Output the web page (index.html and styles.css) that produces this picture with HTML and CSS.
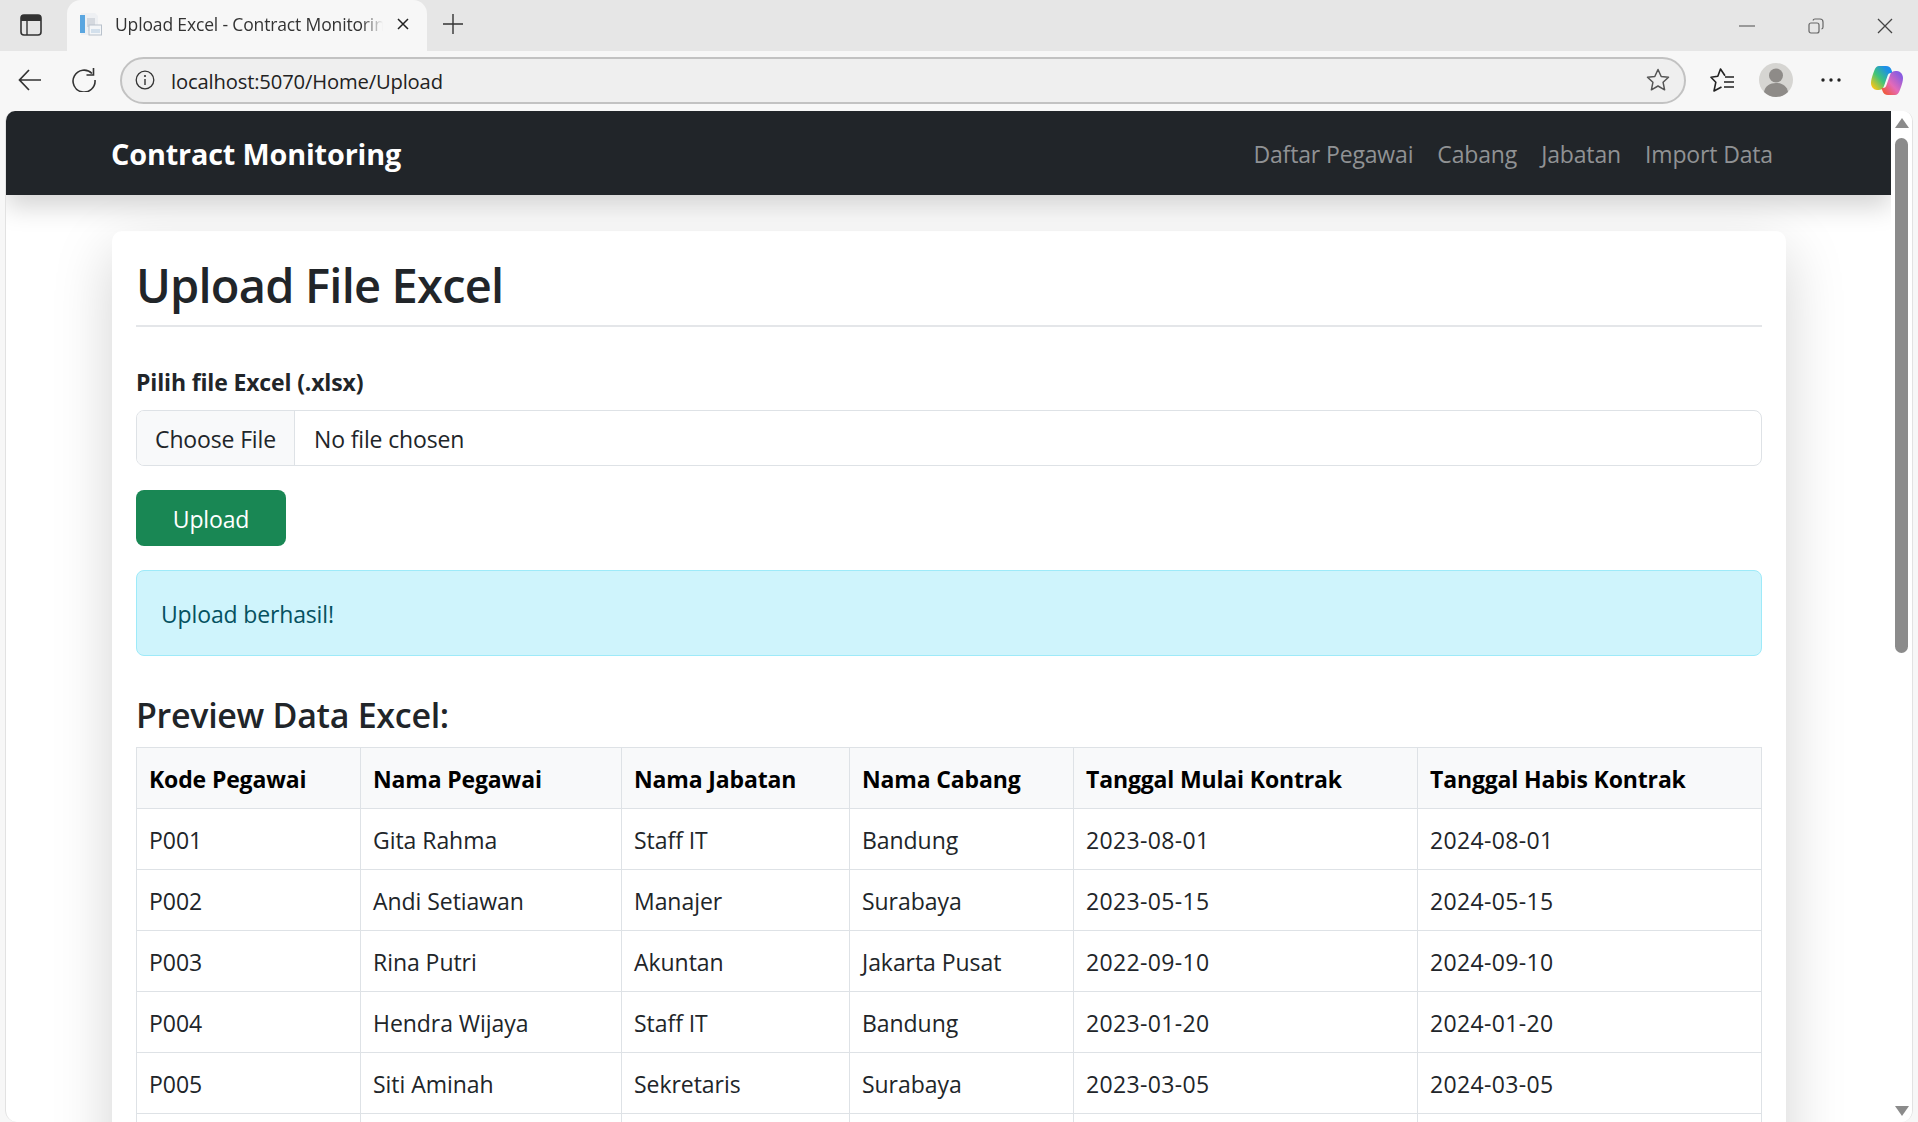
FILE: index.html
```html
<!DOCTYPE html>
<html lang="en">
<head>
  <meta charset="UTF-8" />
  <title>Upload Excel - Contract Monitoring</title>
  <link rel="stylesheet" href="styles.css">
</head>
<body>
  <!-- browser chrome -->
  <div class="tabstrip">
    <svg class="sidebar-icon" width="22" height="22" viewBox="0 0 22 22"><rect x="1" y="1" width="20" height="20" rx="3" fill="none" stroke="#333" stroke-width="1.6"/><path d="M1 4a3 3 0 0 1 3-3h14a3 3 0 0 1 3 3v3H1z" fill="#333"/><path d="M7 7v14" stroke="#333" stroke-width="1.4"/></svg>
    <div class="tab">
      <svg class="favicon" width="24" height="24" viewBox="0 0 24 24"><path d="M3 1h14l3 3v19H3z" fill="#eef0f3"/><rect x="2" y="3" width="5" height="18" fill="#5aa6e0"/><rect x="9" y="6" width="8" height="9" fill="#d5d9df"/><rect x="11" y="13" width="12.500" height="10" fill="#f4f6f8" stroke="#b9c2cc"/><rect x="13" y="17" width="9" height="4" fill="#d3e0ec"/></svg>
      <span class="tab-title">Upload Excel - Contract Monitoring</span>
      <svg class="tab-close" width="14" height="14" viewBox="0 0 14 14"><path d="M2 2l10 10M12 2L2 12" stroke="#222" stroke-width="1.5"/></svg>
    </div>
    <svg class="new-tab" width="20" height="20" viewBox="0 0 20 20"><path d="M10 0v20M0 10h20" stroke="#333" stroke-width="1.4"/></svg>
    <div class="window-controls">
      <svg width="16" height="16" viewBox="0 0 16 16"><path d="M0 8h16" stroke="#777" stroke-width="1.4"/></svg>
      <svg width="16" height="16" viewBox="0 0 16 16"><rect x="1" y="5" width="10" height="10" rx="2" fill="none" stroke="#666" stroke-width="1.2"/><path d="M5 2.500A2 2 0 0 1 7 1h5a3 3 0 0 1 3 3v5a2 2 0 0 1-1.500 2" fill="none" stroke="#666" stroke-width="1.2"/></svg>
      <svg width="16" height="16" viewBox="0 0 16 16"><path d="M1 1l14 14M15 1L1 15" stroke="#444" stroke-width="1.3"/></svg>
    </div>
  </div>

  <div class="toolbar">
    <svg class="back" width="24" height="24" viewBox="0 0 24 24"><path d="M23 12H2M11 2L1.500 12 11 22" fill="none" stroke="#333" stroke-width="1.7"/></svg>
    <svg class="reload" width="24" height="24" viewBox="0 0 24 24"><path d="M20 5.500A11 11 0 1 0 23 12" fill="none" stroke="#333" stroke-width="1.6"/><path d="M21.500 0v7h-7" fill="none" stroke="#333" stroke-width="1.6"/></svg>
    <div class="address">
      <svg width="20" height="20" viewBox="0 0 20 20"><circle cx="10" cy="10" r="8.800" fill="none" stroke="#333" stroke-width="1.3"/><circle cx="10" cy="6" r="1.100" fill="#333"/><path d="M10 9v6" stroke="#333" stroke-width="1.4"/></svg>
      <span class="url">localhost:5070/Home/Upload</span>
      <svg class="fav-star" width="24" height="24" viewBox="0 0 24 24"><path d="M12 1.500l3.200 7 7.300.8-5.400 5 1.500 7.500L12 18l-6.600 3.800 1.500-7.500-5.400-5 7.300-.8z" fill="none" stroke="#555" stroke-width="1.500" stroke-linejoin="round"/></svg>
    </div>
    <svg class="favorites" width="24" height="24" viewBox="0 0 24 24"><path d="M15 7.800L10.500 1 7.800 8.300 1 9.300l4.800 5L4 23l7.500-4" fill="none" stroke="#222" stroke-width="1.600" stroke-linejoin="round"/><path d="M15 9h9M14 14h10M14 19h10" stroke="#222" stroke-width="1.600"/></svg>
    <svg class="avatar" width="34" height="34" viewBox="0 0 34 34"><circle cx="17" cy="17" r="17" fill="#d6d5d2"/><circle cx="17" cy="12.500" r="7" fill="#8e8b88"/><path d="M5 29c1-6 6-9 12-9s11 3 12 9a17 17 0 0 1-24 0z" fill="#8e8b88"/></svg>
    <svg class="more" width="20" height="4" viewBox="0 0 20 4"><circle cx="2" cy="2" r="1.700" fill="#222"/><circle cx="10" cy="2" r="1.700" fill="#222"/><circle cx="18" cy="2" r="1.700" fill="#222"/></svg>
    <svg class="copilot" width="32" height="31" viewBox="0 0 32 31">
      <defs>
        <linearGradient id="copilotLeft" x1="0" y1="1" x2="1" y2="0"><stop offset=".1" stop-color="#f5c518"/><stop offset=".45" stop-color="#3fc47a"/><stop offset=".8" stop-color="#1d8fe8"/></linearGradient>
        <linearGradient id="copilotRight" x1="0" y1="1" x2="1" y2="0"><stop offset=".15" stop-color="#8a5ce0"/><stop offset=".55" stop-color="#e46ab8"/><stop offset=".95" stop-color="#f2562a"/></linearGradient>
      </defs>
      <path d="M8 1H15C18 1 19.500 2.500 20.500 5L21.500 8H20C18 8 17 9 16.500 11L13 21C12 24 10 25 7.500 25H6C3 25 0 22 0 18C0 15 1 12 2 9L3.500 5C4.500 2.500 6 1 8 1Z" fill="url(#copilotLeft)"/>
      <path d="M8 1H15C18 1 19.500 2.500 20.500 5L21.500 8H20C18 8 17 9 16.500 11L13 21C12 24 10 25 7.500 25H6C3 25 0 22 0 18C0 15 1 12 2 9L3.500 5C4.500 2.500 6 1 8 1Z" fill="url(#copilotRight)" transform="rotate(180 16 15.500)"/>
    </svg>
  </div>

  <div class="window">
    <div class="page">
      <nav class="navbar">
        <a class="brand" href="#">Contract Monitoring</a>
        <ul class="nav-links">
          <li><a href="#">Daftar Pegawai</a></li>
          <li><a href="#">Cabang</a></li>
          <li><a href="#">Jabatan</a></li>
          <li><a href="#">Import Data</a></li>
        </ul>
      </nav>

      <main class="card">
        <h1>Upload File Excel</h1>
        <form class="upload-form">
          <label class="form-label">Pilih file Excel (.xlsx)</label>
          <div class="file-input">
            <span class="file-button">Choose File</span>
            <span class="file-name">No file chosen</span>
          </div>
          <button class="btn-upload" type="button">Upload</button>
        </form>
        <div class="alert">Upload berhasil!</div>
        <h3>Preview Data Excel:</h3>
        <table class="data-table">
          <colgroup>
            <col class="col-kode"><col class="col-nama"><col class="col-jabatan"><col class="col-cabang"><col class="col-mulai"><col class="col-habis">
          </colgroup>
          <thead>
            <tr><th>Kode Pegawai</th><th>Nama Pegawai</th><th>Nama Jabatan</th><th>Nama Cabang</th><th>Tanggal Mulai Kontrak</th><th>Tanggal Habis Kontrak</th></tr>
          </thead>
          <tbody>
            <tr><td>P001</td><td>Gita Rahma</td><td>Staff IT</td><td>Bandung</td><td>2023-08-01</td><td>2024-08-01</td></tr>
            <tr><td>P002</td><td>Andi Setiawan</td><td>Manajer</td><td>Surabaya</td><td>2023-05-15</td><td>2024-05-15</td></tr>
            <tr><td>P003</td><td>Rina Putri</td><td>Akuntan</td><td>Jakarta Pusat</td><td>2022-09-10</td><td>2024-09-10</td></tr>
            <tr><td>P004</td><td>Hendra Wijaya</td><td>Staff IT</td><td>Bandung</td><td>2023-01-20</td><td>2024-01-20</td></tr>
            <tr><td>P005</td><td>Siti Aminah</td><td>Sekretaris</td><td>Surabaya</td><td>2023-03-05</td><td>2024-03-05</td></tr>
            <tr><td>&nbsp;</td><td>&nbsp;</td><td>&nbsp;</td><td>&nbsp;</td><td>&nbsp;</td><td>&nbsp;</td></tr>
          </tbody>
        </table>
      </main>
    </div>

    <div class="scrollbar">
      <span class="arrow-up"></span>
      <span class="thumb"></span>
      <span class="track"></span>
      <span class="arrow-down"></span>
    </div>
  </div>
</body>
</html>
```

FILE: styles.css
```css
/* Reset */
* {
  box-sizing: border-box;
}

html, body {
  height: 100%;
  margin: 0;
  overflow: hidden;
}

body {
  display: flex;
  flex-direction: column;
  background: #f7f7f7;
  color: #212529;
  font-family: "Open Sans", "Noto Sans", Arial, sans-serif;
  font-size: 23px;
  letter-spacing: -0.15px;
}

/* Tab strip */
.tabstrip {
  height: 51px;
  flex: none;
  display: flex;
  align-items: center;
  background: #e6e6e6;
}

.sidebar-icon {
  margin: 0 25px 2px 20px;
}

.tab {
  width: 360px;
  height: 51px;
  display: flex;
  align-items: center;
  padding: 0 16px 4px 11px;
  background: #f7f7f7;
  border-radius: 14px 14px 0 0;
}

.tab-title {
  width: 268px;
  margin-left: 13px;
  font-size: 17.5px;
  color: #333;
  white-space: nowrap;
  overflow: hidden;
  -webkit-mask-image: linear-gradient(to right, #000 92%, transparent);
  mask-image: linear-gradient(to right, #000 92%, transparent);
}

.tab-close {
  margin-left: 13px;
}

.new-tab {
  margin: 0 0 4px 16px;
}

.window-controls {
  margin-left: auto;
  display: flex;
  align-items: center;
  gap: 53px;
  padding-right: 25px;
}

/* Toolbar */
.toolbar {
  height: 60px;
  flex: none;
  display: flex;
  align-items: center;
  padding-bottom: 2px;
}

.back {
  margin-left: 18px;
}

.reload {
  margin-left: 30px;
}

.address {
  width: 1566px;
  height: 47px;
  margin-left: 24px;
  padding: 0 14px 0 13px;
  display: flex;
  align-items: center;
  background: #efefef;
  border: 2px solid #c2c2c2;
  border-radius: 24px;
}

.url {
  margin-left: 16px;
  padding-top: 2px;
  font-size: 20.2px;
  color: #222;
}

.fav-star {
  margin-left: auto;
}

.favorites {
  margin-left: 24px;
}

.avatar {
  margin-left: 25px;
}

.more {
  margin-left: 28px;
}

.copilot {
  margin-left: 30px;
}

/* Page viewport */
.window {
  flex: 1;
  min-height: 0;
  display: flex;
  margin: 0 5px;
  background: #fff;
  border-left: 1px solid #e2e2e2;
  border-right: 1px solid #e2e2e2;
  border-radius: 10px 10px 12px 12px;
  overflow: hidden;
}

.page {
  width: 1885px;
  flex: none;
  overflow: hidden;
}

.navbar {
  height: 84px;
  position: relative;
  display: flex;
  align-items: center;
  justify-content: space-between;
  padding: 2px 118px 0 105px;
  background: #212529;
  box-shadow: 0 12px 24px rgba(0,0,0,.17);
}

.brand {
  margin-bottom: 2px;
  color: #fff;
  font-size: 28.8px;
  font-weight: 700;
  text-decoration: none;
}

.nav-links {
  display: flex;
  gap: 24px;
  margin: 0;
  padding: 0;
  list-style: none;
}

.nav-links a {
  color: #909294;
  text-decoration: none;
}

/* Card */
.card {
  width: 1674px;
  margin: 36px 0 0 106px;
  padding: 24px 24px 40px;
  background: #fff;
  border-radius: 10px;
  box-shadow: 0 20px 60px rgba(0,0,0,.175);
}

h1 {
  margin: 0 0 37px;
  padding-bottom: 9px;
  font-size: 47px;
  font-weight: 600;
  letter-spacing: -0.8px;
  line-height: 61px;
  border-bottom: 2px solid #e4e6e9;
}

.form-label {
  display: block;
  margin-bottom: 10px;
  font-weight: 700;
  line-height: 36px;
}

.file-input {
  height: 56px;
  display: flex;
  align-items: center;
  border: 1px solid #dee2e6;
  border-radius: 8px;
  overflow: hidden;
}

.file-button {
  width: 158px;
  height: 100%;
  padding-top: 2px;
  display: flex;
  align-items: center;
  justify-content: center;
  background: #f8f9fa;
  border-right: 1px solid #dee2e6;
}

.file-name {
  margin-left: 19px;
  padding-top: 2px;
}

.btn-upload {
  display: block;
  width: 150px;
  height: 56px;
  margin-top: 24px;
  padding: 2px 0 0;
  background: #198754;
  border: none;
  border-radius: 8px;
  color: #fff;
  font: inherit;
  letter-spacing: inherit;
}

.alert {
  height: 86px;
  margin-top: 24px;
  padding: 2px 24px 0;
  display: flex;
  align-items: center;
  background: #cff4fc;
  border: 1px solid #9eeaf9;
  border-radius: 8px;
  color: #055160;
}

h3 {
  margin: 37px 0 10px;
  font-size: 34px;
  font-weight: 600;
  letter-spacing: -0.3px;
  line-height: 44px;
}

/* Table */
.data-table {
  width: 1625px;
  table-layout: fixed;
  border-collapse: collapse;
}

.col-kode { width: 224px; }
.col-nama { width: 261px; }
.col-jabatan { width: 228px; }
.col-cabang { width: 224px; }
.col-mulai { width: 344px; }
.col-habis { width: 344px; }

.data-table th,
.data-table td {
  height: 61px;
  padding: 2px 12px 0;
  border: 1px solid #dee2e6;
  text-align: left;
  white-space: nowrap;
}

.data-table td {
  letter-spacing: -0.05px;
}

/* date columns run a little wider */
.data-table td:nth-child(n+5) {
  letter-spacing: 0.35px;
}

.data-table th {
  background: #f8f9fa;
  color: #000;
  font-weight: 700;
}

/* Scrollbar */
.scrollbar {
  flex: 1;
  display: flex;
  flex-direction: column;
  align-items: center;
  padding: 7px 0 6px;
  background: #fff;
}

.arrow-up,
.arrow-down {
  width: 0;
  height: 0;
  border-left: 7px solid transparent;
  border-right: 7px solid transparent;
}

.arrow-up {
  border-bottom: 10px solid #8b8b8b;
}

.arrow-down {
  border-top: 10px solid #8b8b8b;
}

.thumb {
  width: 13px;
  height: 515px;
  margin-top: 10px;
  background: #8b8b8b;
  border-radius: 7px;
}

.track {
  flex: 1;
}
```
